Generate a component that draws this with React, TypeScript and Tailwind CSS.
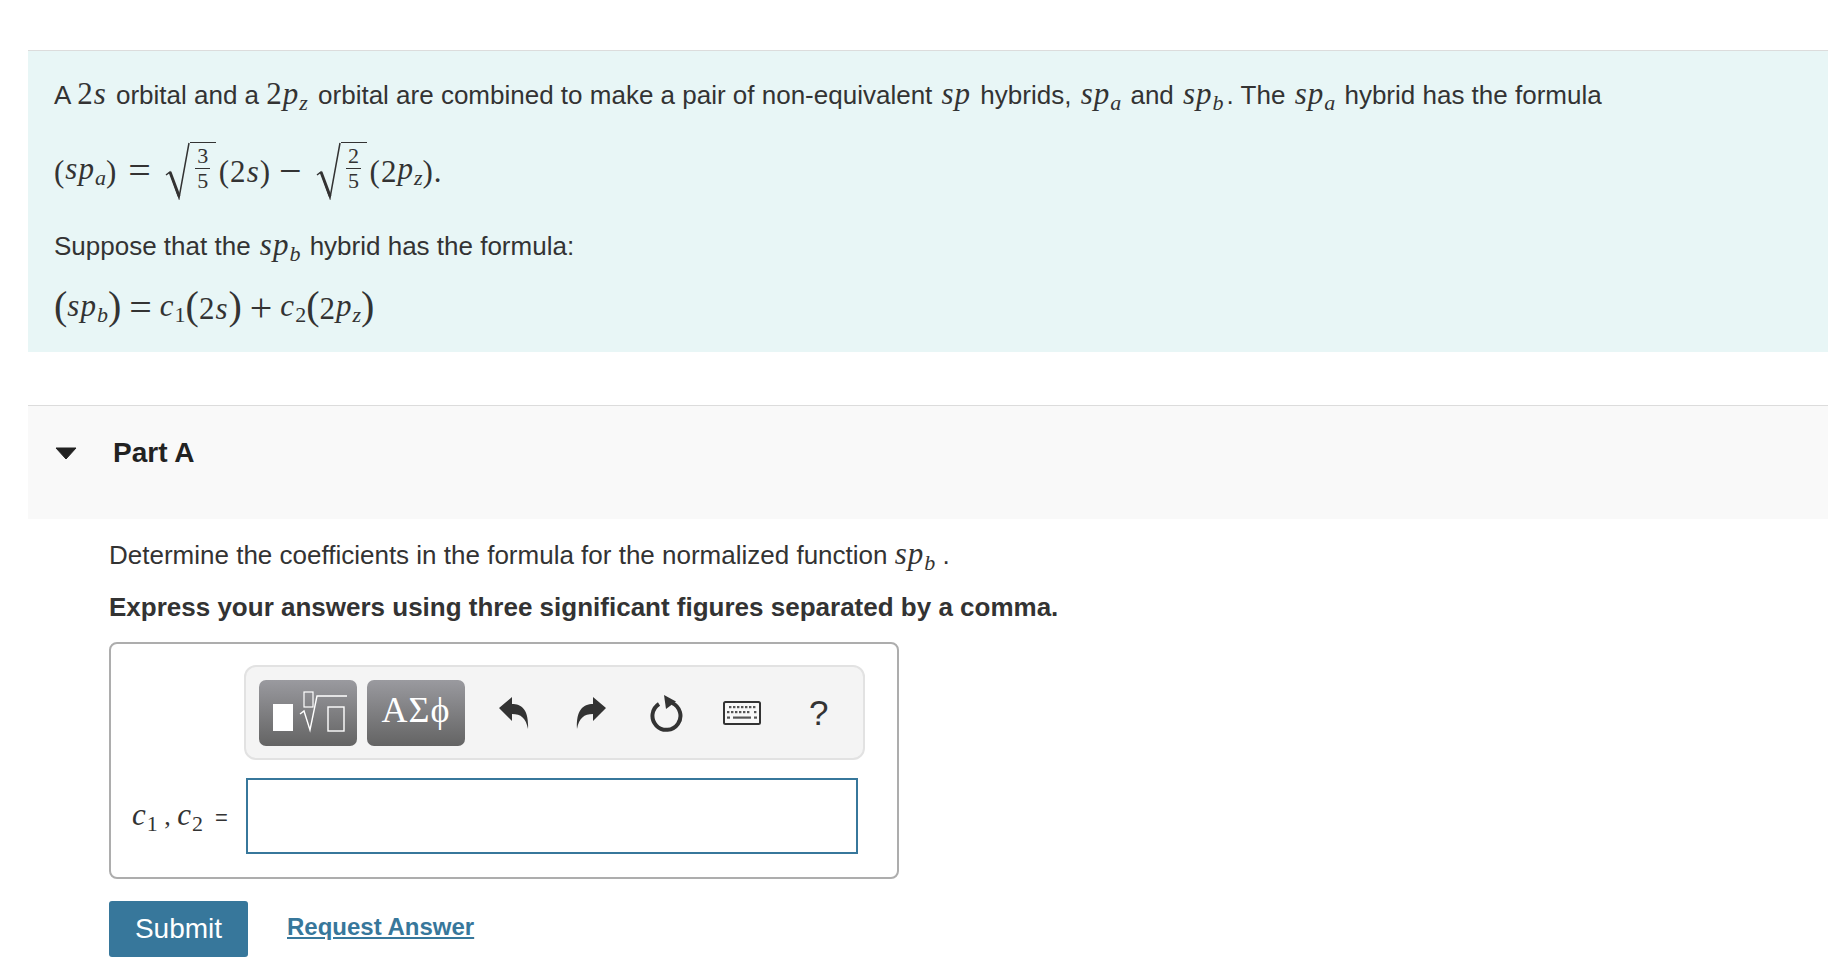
import React from "react";

const sans = "font-['Liberation_Sans',Arial,sans-serif]";
const serif = "font-['Liberation_Serif','Times_New_Roman',serif]";

function I({ c, sub, digit }: { c: string; sub?: string; digit?: boolean }) {
  return (
    <span className={`${serif} italic text-[31px] leading-none tracking-[1px]`}>
      {c}
      {sub ? (
        <sub className={`text-[22px] leading-none align-[-6px] bottom-auto tracking-normal ${digit ? "not-italic" : ""}`}>{sub}</sub>
      ) : null}
    </span>
  );
}
function T({ children }: { children: React.ReactNode }) {
  return <span className="mx-[2px]">{children}</span>;
}
function N({ c }: { c: string }) {
  return <span className={`${serif} text-[31px] leading-none tracking-[1px]`}>{c}</span>;
}
function Op({ c }: { c: string }) {
  return <span className={`${serif} text-[40px] leading-none mx-[8px]`}>{c}</span>;
}
function Paren({ c }: { c: string }) {
  return <span className={`${serif} text-[40px] leading-none mt-[-5px]`}>{c}</span>;
}
function Sqrt({ a, b }: { a: string; b: string }) {
  return (
    <span className="inline-flex items-center align-middle h-[58px] ml-[6px] mr-[3px]">
      <svg width="25" height="58" viewBox="0 0 25 58" className="shrink-0">
        <path d="M1 33 L5 30 L14 56 L24 1" fill="none" stroke="#333" strokeWidth="1.5" />
        <path d="M5 30 L14 54" fill="none" stroke="#333" strokeWidth="3" />
      </svg>
      <span className="flex flex-col items-center justify-start border-t-[1.5px] border-[#333] h-[58px] w-[26px]">
        <span className={`${serif} text-[22px] leading-[24px] mt-[1px]`}>{a}</span>
        <span className="w-[15px] h-px bg-[#333] shrink-0" />
        <span className={`${serif} text-[22px] leading-[24px]`}>{b}</span>
      </span>
    </span>
  );
}

function KeyboardIcon() {
  return (
    <svg width="38" height="26" viewBox="0 0 38 26">
      <rect x="1" y="2" width="36" height="22" rx="1.5" fill="#f8f8f8" stroke="#333" strokeWidth="2" />
      <g fill="#555">
        {[6, 10, 14, 18, 22, 26, 30].map((x) => (
          <rect key={x} x={x} y="6" width="2.4" height="2.2" />
        ))}
        {[4, 8, 12, 16, 20, 24, 31].map((x) => (
          <rect key={x} x={x} y="11" width="2.4" height="2.2" />
        ))}
        <rect x="4" y="16.5" width="3" height="2.2" />
        <rect x="10" y="16.5" width="18" height="2.2" />
        <rect x="31" y="16.5" width="3" height="2.2" />
      </g>
    </svg>
  );
}

export default function App() {
  return (
    <div className={`${sans} w-[1828px] h-[980px] overflow-hidden bg-white text-[#333] text-[26px] pl-[28px] pt-[50px]`}>
      <div className="border-t border-[#dcdcdc] bg-[#e8f6f6] h-[302px] pl-[26px] pt-[24px]">
        <p className="h-[40px] leading-[40px] whitespace-nowrap">
          A <N c="2" /><I c="s" /><span className="ml-[2px]"> orbital and a </span><N c="2" /><I c="p" sub="z" /><span className="ml-[3px]"> orbital are combined to make a pair of non-equivalent </span><T><I c="sp" /></T> hybrids, <T><I c="sp" sub="a" /></T> and <T><I c="sp" sub="b" /></T><span className="ml-[1px]">. The </span><T><I c="sp" sub="a" /></T> hybrid has the formula
        </p>
        <div className="flex items-center h-[58px] mt-[27px] whitespace-nowrap">
          <N c="(" /><I c="sp" sub="a" /><N c=")" /><span className="w-[3px]" /><Op c="=" />
          <Sqrt a="3" b="5" />
          <N c="(2" /><I c="s" /><N c=")" /><Op c="−" />
          <Sqrt a="2" b="5" />
          <N c="(2" /><I c="p" sub="z" /><N c=")." />
        </div>
        <p className="h-[40px] leading-[40px] mt-[26px] whitespace-nowrap">
          Suppose that the <T><I c="sp" sub="b" /></T> hybrid has the formula:
        </p>
        <div className="flex items-center h-[44px] mt-[20px] whitespace-nowrap">
          <Paren c="(" /><I c="sp" sub="b" /><Paren c=")" /><Op c="=" />
          <I c="c" sub="1" digit /><Paren c="(" /><N c="2" /><I c="s" /><Paren c=")" /><Op c="+" />
          <I c="c" sub="2" digit /><Paren c="(" /><N c="2" /><I c="p" sub="z" /><Paren c=")" />
        </div>
      </div>

      <div className="mt-[53px] border-t border-[#dcdcdc] bg-[#f9f9f9] h-[114px] flex items-center pb-[19px]">
        <svg width="22" height="13" viewBox="0 0 22 13" className="ml-[27px]">
          <path d="M1 1 H21 L11 12 Z" fill="#222" stroke="#222" strokeLinejoin="round" />
        </svg>
        <span className="ml-[36px] font-bold text-[#222] text-[28px]">Part A</span>
      </div>

      <div className="pl-[81px]">
        <p className="mt-[16px] h-[40px] leading-[40px] whitespace-nowrap">
          Determine the coefficients in the formula for the normalized function <I c="sp" sub="b" /> .
        </p>
        <p className="mt-[12px] h-[40px] leading-[40px] font-bold whitespace-nowrap">
          Express your answers using three significant figures separated by a comma.
        </p>

        <div className="mt-[15px] w-[790px] h-[237px] border-2 border-[#adadad] rounded-[8px] pl-[133px] pt-[21px]">
          <div className="w-[621px] h-[95px] border-2 border-[#e2e2e2] bg-[#f4f4f4] rounded-[12px] flex items-center pl-[13px]">
            <div className="w-[98px] h-[66px] rounded-[7px] bg-gradient-to-b from-[#9a9a9f] to-[#646464] relative shrink-0">
              <svg width="98" height="66" viewBox="0 0 98 66" className="absolute inset-0">
                <rect x="14" y="24" width="20" height="27" fill="#fff" />
                <rect x="45" y="12" width="9" height="15" fill="none" stroke="#fff" strokeWidth="1.2" />
                <path d="M41 34 L45 31 L51 50 L58 16 H88" fill="none" stroke="#fff" strokeWidth="1.4" />
                <rect x="69" y="27" width="16" height="24" fill="none" stroke="#fff" strokeWidth="1.4" />
              </svg>
            </div>
            <div className="ml-[10px] w-[98px] h-[66px] rounded-[7px] bg-gradient-to-b from-[#9a9a9f] to-[#646464] flex items-center justify-center pb-[6px] shrink-0">
              <span className={`${serif} text-white text-[36px] leading-none tracking-[1px]`}>ΑΣϕ</span>
            </div>
            <svg width="32" height="34" viewBox="0 0 32 34" className="ml-[33px] shrink-0">
              <path d="M1 12 L14 1 V8 C24 8 31 14 30 33 C28 22 23 18 14 18 V25 Z" fill="#333" />
            </svg>
            <svg width="32" height="34" viewBox="0 0 32 34" className="ml-[45px] shrink-0">
              <path d="M31 12 L18 1 V8 C8 8 1 14 2 33 C4 22 9 18 18 18 V25 Z" fill="#333" />
            </svg>
            <svg width="34" height="38" viewBox="0 0 34 38" className="ml-[42px] shrink-0">
              <path d="M10 10 A14 14 0 1 0 23 9" fill="none" stroke="#333" strokeWidth="4" />
              <path d="M15 1 L27 7.5 L17 15 Z" fill="#333" />
            </svg>
            <span className="ml-[40px] shrink-0 flex"><KeyboardIcon /></span>
            <span className="ml-[48px] text-[35px] leading-none text-[#333] shrink-0">?</span>
          </div>
          <div className="flex items-center mt-[18px] ml-[-133px]">
            <span className="ml-[21px] whitespace-nowrap">
              <I c="c" sub="1" digit /><span className={`${serif} text-[26px]`}> , </span><I c="c" sub="2" digit />
              <span className="ml-[12px] text-[22px]">=</span>
            </span>
            <div className="ml-auto mr-[39px] w-[612px] h-[76px] border-2 border-[#37779b] bg-white" />
          </div>
        </div>

        <div className="flex items-center mt-[22px]">
          <button className="w-[139px] h-[56px] rounded-[3px] bg-[#37779b] text-white text-[28px]">Submit</button>
          <a className="ml-[39px] mb-[4px] text-[#37779b] font-bold underline text-[24px]">Request Answer</a>
        </div>
      </div>
    </div>
  );
}
